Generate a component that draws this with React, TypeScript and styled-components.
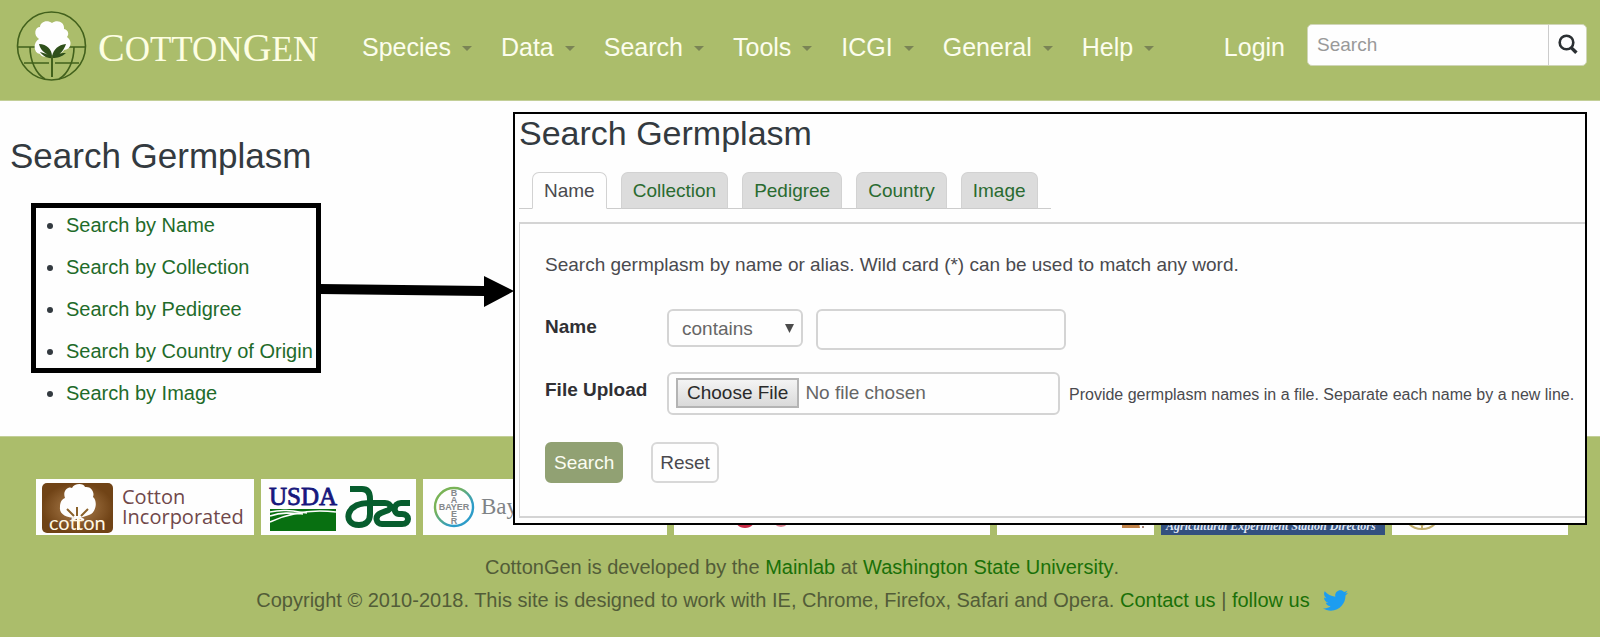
import React from "react";
import styled, { createGlobalStyle, css } from "styled-components";
import { FaTwitter } from "react-icons/fa";

const GlobalStyle = createGlobalStyle`
  *, *::before, *::after { box-sizing: border-box; }
  body {
    margin: 0;
    background: #fefefe;
    color: #333a40;
    font-family: "Liberation Sans", Arial, sans-serif;
    font-size: 20px;
  }
  button, input, select { font-family: inherit; }
`;

const Page = styled.div`
  position: relative;
  overflow: hidden;
`;

/* ---------- header ---------- */

const Header = styled.header`
  display: flex;
  align-items: center;
  height: 101px;
  padding: 0 13px 6px 16px;
  background: #abbd6b;
  border-bottom: 1px solid #c3cf98;
`;

const Brand = styled.a`
  display: flex;
  align-items: center;
  gap: 10px;
  width: 346px;
  color: #fdfee2;
  text-decoration: none;
`;

const Wordmark = styled.span`
  padding-top: 4px;
  font-family: "Liberation Serif", "Times New Roman", serif;
  font-size: 40px;
  line-height: 44px;
`;

const SmallCaps = styled.span`
  font-size: 35px;
`;

const Menu = styled.nav`
  display: flex;
  gap: 29px;
`;

const MenuButton = styled.button`
  display: flex;
  align-items: center;
  gap: 11px;
  padding: 0;
  border: 0;
  background: none;
  color: #fcfdee;
  font-size: 25px;
  line-height: 30px;

  &::after {
    content: "";
    margin-top: 3px;
    border: 5px solid transparent;
    border-top-color: #7a8455;
    border-bottom: 0;
  }
`;

const Account = styled.div`
  display: flex;
  align-items: center;
  gap: 22px;
  margin-left: auto;
`;

const LoginLink = styled.a`
  color: #fcfdee;
  font-size: 25px;
  line-height: 30px;
  text-decoration: none;
`;

const SiteSearch = styled.form`
  display: flex;
  width: 280px;
  height: 42px;
  margin-bottom: 4px;
  border: 1px solid #d0d6b8;
  border-radius: 5px;
  background: #fefefe;
  overflow: hidden;
`;

const SiteSearchInput = styled.input`
  flex: 1;
  min-width: 0;
  padding: 0 9px;
  border: 0;
  background: none;
  font-size: 19px;
  &::placeholder { color: #999; }
`;

const SiteSearchButton = styled.button`
  display: flex;
  align-items: center;
  justify-content: center;
  width: 38px;
  padding: 0 0 2px;
  border: 0;
  border-left: 1px solid #ccc;
  background: none;
`;

/* ---------- main content ---------- */

const Main = styled.main`
  padding: 35px 10px 22px;
`;

const PageTitle = styled.h1`
  margin: 0;
  font-size: 35px;
  font-weight: 400;
  line-height: 40px;
`;

const SearchList = styled.ul`
  position: relative;
  margin: 28px 0 0;
  padding: 0 0 0 56px;
`;

const SearchItem = styled.li`
  line-height: 42px;
`;

const GreenLink = styled.a`
  color: #1f6b2a;
  text-decoration: none;
`;

const Highlight = styled.div`
  position: absolute;
  top: -1px;
  left: 21px;
  width: 290px;
  height: 170px;
  border: 5px solid #000;
  pointer-events: none;
`;

const ArrowMark = styled.svg`
  position: absolute;
  top: 68px;
  left: 285px;
`;

/* ---------- floating search panel ---------- */

const Panel = styled.section`
  position: absolute;
  top: 112px;
  left: 513px;
  right: 13px;
  padding: 0 0 5px 4px;
  border: 2px solid #000;
  background: #fefefe;
`;

const PanelTitle = styled.h2`
  margin: 0;
  font-size: 34px;
  font-weight: 400;
  line-height: 38px;
`;

const Tabs = styled.div`
  display: inline-flex;
  gap: 14px;
  margin-top: 20px;
  padding: 0 13px;
  border-bottom: 1px solid #ccc;
`;

const Tab = styled.button<{ $active?: boolean }>`
  height: 37px;
  margin-bottom: -1px;
  padding: 0 11px;
  border: 1px solid #d2d2d2;
  border-bottom-color: #ccc;
  border-radius: 7px 7px 0 0;
  background: #dcdcdc;
  color: #2a6b30;
  font-size: 19px;
  ${(p) =>
    p.$active &&
    css`
      border-bottom-color: #fefefe;
      background: #fefefe;
      color: #4a4a4e;
    `}
`;

const FormBox = styled.form`
  display: flex;
  flex-direction: column;
  margin-top: 13px;
  padding: 29px 0 33px 25px;
  border: solid #d4d4d4;
  border-width: 2px 0 2px 1px;
`;

const Intro = styled.p`
  margin: 0 0 32px;
  color: #4a4a4e;
  font-size: 19px;
  line-height: 24px;
`;

const FieldRow = styled.div`
  display: flex;
  align-items: flex-start;
  margin-bottom: 22px;
`;

const FieldLabel = styled.label`
  flex: none;
  width: 122px;
  padding-top: 6px;
  color: #303034;
  font-size: 19px;
  font-weight: 700;
  line-height: 24px;
`;

const fieldBox = css`
  flex: none;
  border: 2px solid #d4d4d4;
  border-radius: 6px;
  background: #fefefe;
  color: #666;
  font-size: 19px;
`;

const SelectWrap = styled.div`
  position: relative;
  margin-right: 13px;
`;

const MatchSelect = styled.select`
  ${fieldBox}
  display: block;
  appearance: none;
  width: 136px;
  height: 38px;
  padding: 0 13px;
`;

const SelectArrow = styled.svg`
  position: absolute;
  top: 15px;
  right: 9px;
  pointer-events: none;
`;

const NameInput = styled.input`
  ${fieldBox}
  width: 250px;
  height: 41px;
  padding: 0 10px;
`;

const FileInput = styled.input`
  ${fieldBox}
  width: 393px;
  height: 43px;
  padding: 4px 7px 5px;
  line-height: 30px;

  &::file-selector-button {
    height: 30px;
    margin: 0 6px 0 0;
    padding: 0 9px;
    border: 2px solid #b4b4b4;
    border-radius: 0;
    background: linear-gradient(#f4f4f4, #dadada);
    color: #2a2a2a;
    font-family: inherit;
    font-size: 19px;
  }
`;

const Hint = styled.span`
  margin-left: 9px;
  padding-top: 11px;
  color: #4a4a4e;
  font-size: 16px;
  line-height: 24px;
  white-space: nowrap;
`;

const Actions = styled.div`
  display: flex;
  gap: 28px;
  margin-top: 5px;
`;

const ActionButton = styled.button<{ $primary?: boolean }>`
  height: 41px;
  padding: 0 7px;
  border: 2px solid ${(p) => (p.$primary ? "#91a173" : "#d8d8d8")};
  border-radius: 6px;
  background: ${(p) => (p.$primary ? "#91a173" : "#fefefe")};
  color: ${(p) => (p.$primary ? "#fbfdf2" : "#4a4a4e")};
  font-size: 19px;
`;

/* ---------- footer ---------- */

const Footer = styled.footer`
  padding: 42px 32px 22px 36px;
  border-top: 1px solid #c3cf98;
  background: #abbd6b;
`;

const Partners = styled.div`
  display: flex;
  gap: 7px;
  margin-bottom: 16px;
`;

const Partner = styled.a<{ $share: number; $dark?: boolean }>`
  flex: ${(p) => p.$share} 1 0;
  display: block;
  height: 56px;
  overflow: hidden;
  background: ${(p) => (p.$dark ? "#33507f" : "#fefefe")};
  svg { display: block; }
`;

const FooterLine = styled.p`
  display: flex;
  align-items: center;
  justify-content: center;
  margin: 0;
  color: #525c38;
  font-size: 20px;
  line-height: 33px;
  white-space: pre;
`;

const FooterLink = styled.a`
  color: #1a7008;
  text-decoration: none;
`;

const TwitterLink = styled.a`
  display: flex;
  margin-left: 13px;
  color: #1c9df0;
`;

/* ---------- drawings ---------- */

const CottonGenMark = () => (
  <svg width="72" height="72" viewBox="0 0 72 72" fill="none" aria-hidden="true">
    <g stroke="#42611c" strokeWidth="1.6">
      <circle cx="35.5" cy="35" r="34" />
      <path d="M2 36H19M53 36H69" />
      <path d="M8 52H33M39 52H63" />
      <path d="M14 36C14 50 20 63 29 68M58 36C58 50 52 63 43 68" />
    </g>
    <path
      fill="#fefefe"
      d="M23 28C17 24 19 16 24 16C24 11 31 8 36 12C41 8 49 11 48 18C53 19 53 24 51 26C57 30 55 39 48 39C47 42 41 44 36 45C31 47 25 46 24 43C17 42 17 31 23 28Z"
    />
    <path
      fill="#2f501b"
      d="M23 33C31 33 36 39 36 45C38 38 42 34 50 33C48 39 44 44 39 45C43 42 46 42 50 42C46 46 41 47 37 47C31 48 26 44 24 41C28 42 30 43 33 44C28 42 24 38 23 33Z"
    />
    <path stroke="#42611c" strokeWidth="2" d="M36 45V66" />
  </svg>
);

const SearchGlyph = () => (
  <svg width="20" height="21" viewBox="0 0 20 21" fill="none" aria-hidden="true">
    <circle cx="8.5" cy="8.5" r="6.8" stroke="#2b3033" strokeWidth="2.6" />
    <path d="M13.2 13.6L18.4 18.8" stroke="#2b3033" strokeWidth="3.4" />
  </svg>
);

const CottonIncLogo = () => (
  <svg width="218" height="56" viewBox="0 0 218 56">
    <defs>
      <radialGradient id="soil">
        <stop offset="0" stopColor="#b08352" />
        <stop offset="1" stopColor="#704316" />
      </radialGradient>
    </defs>
    <rect x="6" y="4" width="71" height="50" rx="5" fill="url(#soil)" />
    <path
      fill="#fefefe"
      d="M29 19C26 11 33 7 36 9C38 4 48 4 49 8C55 7 59 13 57 18C62 22 60 34 53 36L44 39L40 39C30 39 23 35 24 28C24 23 26 20 29 19Z"
    />
    <path d="M41 37V28M38 37L31 30M45 37L52 30" stroke="#8b622b" strokeWidth="2" fill="none" />
    <path d="M42 37V51M36 41L42 38L48 41" stroke="#fefefe" strokeWidth="2" fill="none" />
    <text x="13" y="51" fill="#fff8e4" fontFamily="Lato, sans-serif" fontSize="20">cotton</text>
    <text fill="#70484a" fontFamily="'Open Sans', sans-serif" fontSize="20">
      <tspan x="86" y="25">Cotton</tspan>
      <tspan x="86" y="45">Incorporated</tspan>
    </text>
  </svg>
);

const UsdaLogo = () => (
  <svg width="156" height="56" viewBox="0 0 156 56">
    <text x="8" y="26" fill="#17177c" stroke="#17177c" strokeWidth="0.8" fontFamily="'Liberation Serif', serif" fontSize="25">USDA</text>
    <rect x="9" y="30" width="66" height="22" fill="#087011" />
    <g fill="none" stroke="#fefefe" strokeWidth="1.6">
      <path d="M9 43C28 34 50 30 75 33" />
      <path d="M9 37C22 33 30 34 42 35" />
      <path d="M9 33C22 30 32 32 46 34" />
    </g>
    <path
      fill="none"
      stroke="#075d2e"
      strokeWidth="6"
      strokeLinejoin="round"
      d="M89 10H101C107 10 109 14 109 20V35C109 42 105 46 98 46C89 46 86 40 88 34C91 27 98 24 108 24H124C131 24 131 31 125 32L120 34C113 37 115 45 121 45H141C149 45 149 35 141 35H138C132 35 132 24 140 24H149"
    />
  </svg>
);

const BayerLogo = () => (
  <svg width="244" height="56" viewBox="0 0 244 56">
    <defs>
      <linearGradient id="ring" x1="0" y1="0" x2="1" y2="1">
        <stop offset="0.3" stopColor="#79b356" />
        <stop offset="0.7" stopColor="#2d9cc8" />
      </linearGradient>
    </defs>
    <circle cx="31" cy="28" r="19" fill="none" stroke="url(#ring)" strokeWidth="2.4" />
    <text fill="#85898c" fontFamily="'Liberation Sans', sans-serif" fontWeight="700" fontSize="9" textAnchor="middle">
      <tspan x="31" y="17">B</tspan>
      <tspan x="31" y="24">A</tspan>
      <tspan x="31" y="31">BAYER</tspan>
      <tspan x="31" y="38">E</tspan>
      <tspan x="31" y="45">R</tspan>
    </text>
    <text x="58" y="35" fill="#808386" fontFamily="'Liberation Serif', serif" fontSize="23">Bayer</text>
  </svg>
);

const RedSealLogo = () => (
  <svg width="316" height="56" viewBox="0 0 316 56">
    <circle cx="71" cy="38" r="11" fill="#c72a45" />
    <circle cx="107" cy="39" r="9" fill="#dc8492" />
  </svg>
);

const OrangeMarkLogo = () => (
  <svg width="157" height="56" viewBox="0 0 157 56">
    <path d="M125 46L136 42L142 44L143 49H125Z" fill="#c08147" />
    <circle cx="146" cy="48" r="1" fill="#8a5d48" />
  </svg>
);

const DirectorsLogo = () => (
  <svg width="224" height="56" viewBox="0 0 224 56">
    <text x="5" y="51" fill="#e0e8f5" fontFamily="'Liberation Serif', serif" fontStyle="italic" fontWeight="700" fontSize="12">
      Agricultural Experiment Station Directors
    </text>
  </svg>
);

const GoldSealLogo = () => (
  <svg width="176" height="56" viewBox="0 0 176 56" fill="none" stroke="#c0ad6c" strokeWidth="2">
    <circle cx="30" cy="31" r="19" />
    <path d="M30 40V50M20 43L30 46L40 43" />
  </svg>
);

/* ---------- page ---------- */

const menus = ["Species", "Data", "Search", "Tools", "ICGI", "General", "Help"];
const searches = ["Name", "Collection", "Pedigree", "Country of Origin", "Image"];
const tabs = ["Name", "Collection", "Pedigree", "Country", "Image"];

export default function App() {
  return (
    <>
      <GlobalStyle />
      <Page>
        <Header>
          <Brand href="#">
            <CottonGenMark />
            <Wordmark>
              C<SmallCaps>OTTON</SmallCaps>G<SmallCaps>EN</SmallCaps>
            </Wordmark>
          </Brand>
          <Menu>
            {menus.map((m) => (
              <MenuButton key={m} type="button">{m}</MenuButton>
            ))}
          </Menu>
          <Account>
            <LoginLink href="#">Login</LoginLink>
            <SiteSearch>
              <SiteSearchInput placeholder="Search" aria-label="Search" />
              <SiteSearchButton type="button" aria-label="Search the site">
                <SearchGlyph />
              </SiteSearchButton>
            </SiteSearch>
          </Account>
        </Header>

        <Main>
          <PageTitle>Search Germplasm</PageTitle>
          <SearchList>
            {searches.map((s) => (
              <SearchItem key={s}>
                <GreenLink href="#">Search by {s}</GreenLink>
              </SearchItem>
            ))}
            <Highlight />
            <ArrowMark width="220" height="40" viewBox="0 0 220 40" aria-hidden="true">
              <path d="M25 12L189 14V4L219 19L189 35V24L25 22Z" />
            </ArrowMark>
          </SearchList>
        </Main>

        <Footer>
          <Partners>
            <Partner href="#" $share={218} aria-label="Cotton Incorporated"><CottonIncLogo /></Partner>
            <Partner href="#" $share={155} aria-label="USDA ARS"><UsdaLogo /></Partner>
            <Partner href="#" $share={244} aria-label="Bayer"><BayerLogo /></Partner>
            <Partner href="#" $share={316} aria-label="Partner"><RedSealLogo /></Partner>
            <Partner href="#" $share={157} aria-label="Partner"><OrangeMarkLogo /></Partner>
            <Partner href="#" $share={224} $dark aria-label="Experiment Station Directors"><DirectorsLogo /></Partner>
            <Partner href="#" $share={176} aria-label="Partner"><GoldSealLogo /></Partner>
          </Partners>
          <FooterLine>
            CottonGen is developed by the <FooterLink href="#">Mainlab</FooterLink> at{" "}
            <FooterLink href="#">Washington State University</FooterLink>.
          </FooterLine>
          <FooterLine>
            Copyright © 2010-2018. This site is designed to work with IE, Chrome, Firefox, Safari and Opera.{" "}
            <FooterLink href="#">Contact us</FooterLink> | <FooterLink href="#">follow us</FooterLink>
            <TwitterLink href="#" aria-label="Twitter"><FaTwitter size={25} /></TwitterLink>
          </FooterLine>
        </Footer>

        <Panel>
          <PanelTitle>Search Germplasm</PanelTitle>
          <Tabs role="tablist">
            {tabs.map((t, i) => (
              <Tab key={t} type="button" role="tab" aria-selected={i === 0} $active={i === 0}>{t}</Tab>
            ))}
          </Tabs>
          <FormBox>
            <Intro>Search germplasm by name or alias. Wild card (*) can be used to match any word.</Intro>
            <FieldRow>
              <FieldLabel htmlFor="name">Name</FieldLabel>
              <SelectWrap>
                <MatchSelect aria-label="Match type" defaultValue="contains">
                  <option>contains</option>
                  <option>exactly</option>
                </MatchSelect>
                <SelectArrow width="9" height="9" viewBox="0 0 9 9" aria-hidden="true">
                  <path d="M0 0H9L4.5 9Z" fill="#4c4c4c" />
                </SelectArrow>
              </SelectWrap>
              <NameInput id="name" type="text" />
            </FieldRow>
            <FieldRow>
              <FieldLabel htmlFor="upload">File Upload</FieldLabel>
              <FileInput id="upload" type="file" />
              <Hint>Provide germplasm names in a file. Separate each name by a new line.</Hint>
            </FieldRow>
            <Actions>
              <ActionButton type="button" $primary>Search</ActionButton>
              <ActionButton type="reset">Reset</ActionButton>
            </Actions>
          </FormBox>
        </Panel>
      </Page>
    </>
  );
}
